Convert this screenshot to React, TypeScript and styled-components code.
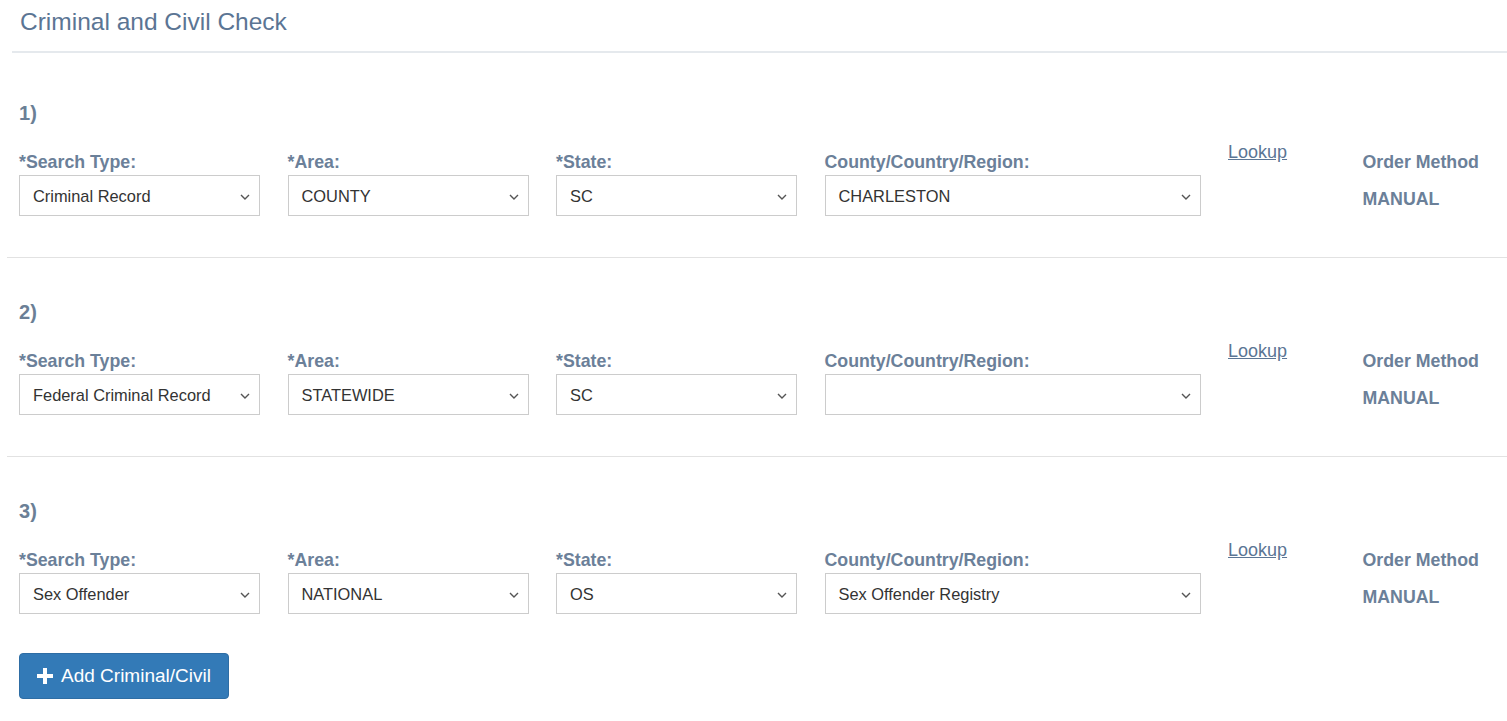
import React from "react";
import styled, { createGlobalStyle } from "styled-components";

const GlobalStyle = createGlobalStyle`
    body {
        margin: 0;
        background: #fff;
        font-family: "Liberation Sans", Arial, sans-serif;
    }
`;

interface Check {
    searchType: string;
    area: string;
    state: string;
    region: string;
    method: string;
}

const checks: Check[] = [
    { searchType: "Criminal Record", area: "COUNTY", state: "SC", region: "CHARLESTON", method: "MANUAL" },
    { searchType: "Federal Criminal Record", area: "STATEWIDE", state: "SC", region: "", method: "MANUAL" },
    { searchType: "Sex Offender", area: "NATIONAL", state: "OS", region: "Sex Offender Registry", method: "MANUAL" },
];

const Chevron = () => (
    <ChevronIcon width="10" height="6" viewBox="0 0 10 6">
        <path d="M1 1 L5 5 L9 1" fill="none" stroke="#555" strokeWidth="1.4" />
    </ChevronIcon>
);

const PlusIcon = () => (
    <svg width="16" height="16" viewBox="0 0 16 16">
        <path d="M6 0h4v6h6v4h-6v6H6v-6H0V6h6z" fill="#fff" />
    </svg>
);

const Field: React.FC<{ label: string; value: string }> = ({ label, value }) => (
    <FieldWrap>
        <Label>{label}</Label>
        <SelectBox>
            <span>{value}</span>
            <Chevron />
        </SelectBox>
    </FieldWrap>
);

const App: React.FC = () => {
    return (
        <Page>
            <GlobalStyle />
            <Header>
                <Title>Criminal and Civil Check</Title>
            </Header>
            {checks.map((c, i) => (
                <Row key={i} last={i === checks.length - 1}>
                    <Number>{i + 1})</Number>
                    <Fields>
                        <Field label="*Search Type:" value={c.searchType} />
                        <Field label="*Area:" value={c.area} />
                        <Field label="*State:" value={c.state} />
                        <Field label="County/Country/Region:" value={c.region} />
                        <LookupLink href="#">Lookup</LookupLink>
                        <MethodBlock>
                            <Label>Order Method</Label>
                            <MethodValue>{c.method}</MethodValue>
                        </MethodBlock>
                    </Fields>
                </Row>
            ))}
            <Footer>
                <AddButton>
                    <PlusIcon />
                    Add Criminal/Civil
                </AddButton>
            </Footer>
        </Page>
    );
};

const Page = styled.div`
    width: 1507px;
    overflow: hidden;
`;

const Header = styled.div`
    margin-left: 12px;
    padding-left: 8px;
    height: 51px;
    border-bottom: 2px solid #e5e9ed;
    margin-bottom: 6px;
`;

const Title = styled.h1`
    margin: 0;
    padding-top: 8px;
    font-size: 24.5px;
    line-height: 28px;
    font-weight: 400;
    color: #5b7594;
`;

const Row = styled.div<{ last: boolean }>`
    margin-left: 7px;
    padding: 43px 0 ${({ last }) => (last ? "0" : "41px")} 12px;
    border-bottom: ${({ last }) => (last ? "none" : "1px solid #e2e2e2")};
`;

const Number = styled.div`
    font-size: 20px;
    line-height: 22px;
    font-weight: 700;
    color: #6b7f96;
    margin-bottom: 28px;
`;

const Fields = styled.div`
    display: grid;
    grid-template-columns: 241px 241px 241px 376px 108px auto;
    column-gap: 27.5px;
    align-items: start;
`;

const FieldWrap = styled.div`
    display: flex;
    flex-direction: column;
    gap: 4px;
`;

const Label = styled.div`
    padding-top: 1px;
    font-size: 17.75px;
    line-height: 18px;
    font-weight: 700;
    color: #6b8099;
    white-space: nowrap;
`;

const SelectBox = styled.div`
    position: relative;
    box-sizing: border-box;
    height: 41px;
    border: 1px solid #cccccc;
    display: flex;
    align-items: center;
    padding: 1px 30px 0 13px;
    font-size: 16.4px;
    color: #333;
    background: #fff;
`;

const ChevronIcon = styled.svg`
    position: absolute;
    right: 9px;
    top: 18px;
`;

const LookupLink = styled.a`
    font-size: 18px;
    line-height: 20px;
    margin-top: -10px;
    color: #5b7594;
    text-decoration: underline;
    white-space: nowrap;
`;

const MethodBlock = styled.div`
    display: flex;
    flex-direction: column;
    gap: 18px;
    margin-left: -1px;
`;

const MethodValue = styled(Label)``;

const Footer = styled.div`
    padding: 39px 0 20px 19px;
`;

const AddButton = styled.button`
    display: inline-flex;
    align-items: center;
    gap: 8px;
    height: 46px;
    padding: 0 17px 0 17px;
    background: #337ab7;
    border: 1px solid #2e6da4;
    border-radius: 4px;
    color: #fff;
    font-family: "Liberation Sans", Arial, sans-serif;
    font-size: 19px;
    cursor: pointer;
`;

export default App;
